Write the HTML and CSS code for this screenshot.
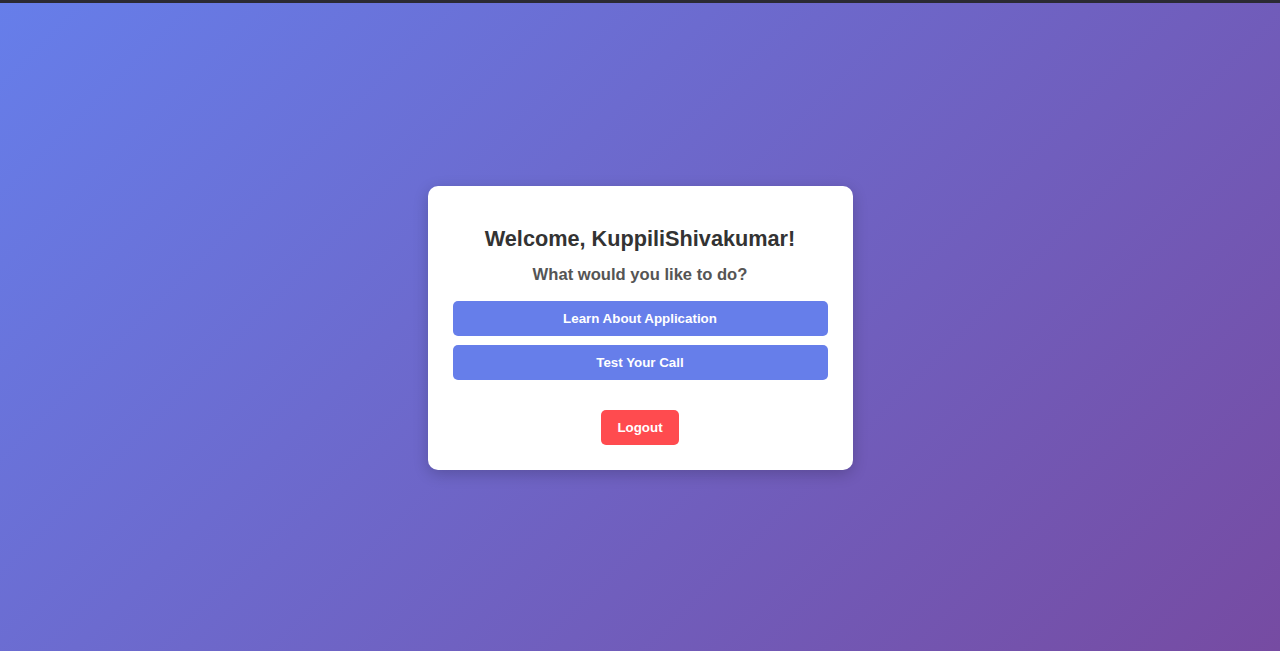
FILE: index.html
```html
<!DOCTYPE html>
<html lang="en">
<head>
<meta charset="utf-8">
<title>Dashboard</title>
<link rel="stylesheet" href="styles.css">
</head>
<body>
<div class="topbar"></div>
<main class="stage">
  <section class="card">
    <h2 class="title">Welcome, KuppiliShivakumar!</h2>
    <h3 class="subtitle">What would you like to do?</h3>
    <div class="actions">
      <button class="btn btn-primary">Learn About Application</button>
      <button class="btn btn-primary">Test Your Call</button>
    </div>
    <button class="btn btn-logout">Logout</button>
  </section>
</main>
</body>
</html>
```
FILE: styles.css
```css
* { box-sizing: border-box; }
html, body { height: 100%; }
body {
  margin: 0;
  font-family: "Liberation Sans", Arial, sans-serif;
  display: flex;
  flex-direction: column;
  background: linear-gradient(135deg, #667eea 0%, #764ba2 100%);
}
.topbar {
  height: 3px;
  background: #2b2a33;
  flex: none;
}
.stage {
  flex: 1;
  display: flex;
  align-items: center;
  justify-content: center;
  padding-top: 2px;
}
.card {
  width: 425px;
  background: #fff;
  border-radius: 10px;
  padding: 25px;
  box-shadow: 0 4px 15px rgba(0, 0, 0, 0.2);
  display: flex;
  flex-direction: column;
  align-items: center;
}
.title {
  margin: 15px 0 0;
  font-size: 21.7px;
  line-height: 25px;
  font-weight: bold;
  color: #333;
}
.subtitle {
  margin: 14px 0 0;
  font-size: 16.6px;
  line-height: 20px;
  font-weight: bold;
  color: #555;
}
.actions {
  margin-top: 16px;
  width: 100%;
  display: flex;
  flex-direction: column;
  gap: 9px;
}
.btn {
  border: none;
  height: 35px;
  border-radius: 5px;
  font-family: "Liberation Sans", Arial, sans-serif;
  font-size: 13.333px;
  font-weight: bold;
  color: #fff;
  cursor: pointer;
}
.btn-primary {
  width: 100%;
  background: #667eea;
}
.btn-logout {
  margin-top: 30px;
  padding: 0 16.5px;
  background: #ff4b4f;
}
```
